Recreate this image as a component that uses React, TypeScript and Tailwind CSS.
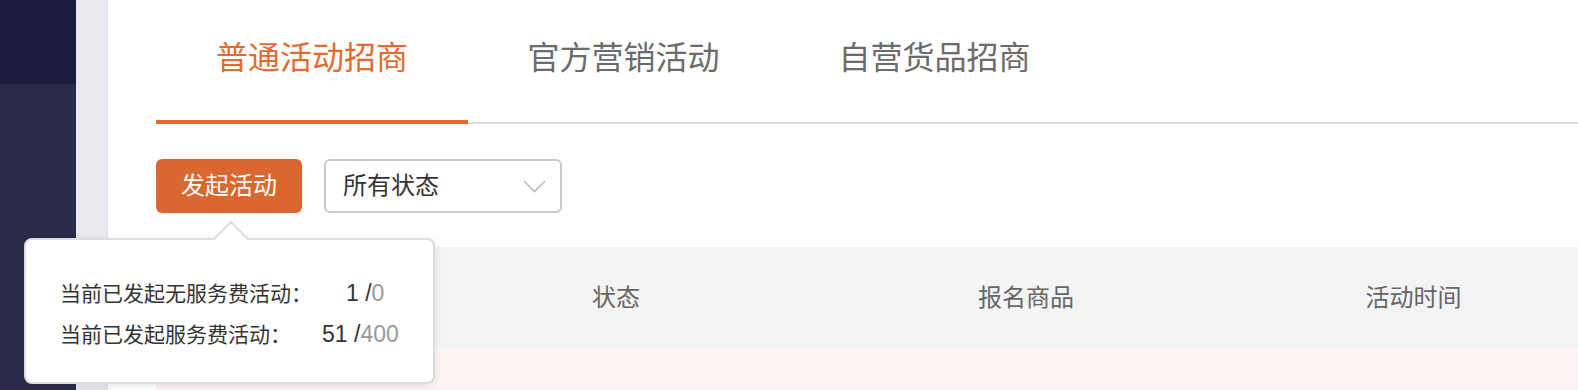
import React from "react";

const FONT = "font-['Liberation_Sans','Noto_Sans_CJK_SC',sans-serif]";

function Chevron() {
  return (
    <svg width="23" height="13" viewBox="0 0 23 13" fill="none">
      <path d="M1 1L11.5 11.5L22 1" stroke="#bdbdc2" strokeWidth="1.6" />
    </svg>
  );
}

export default function App() {
  const tabs = ["普通活动招商", "官方营销活动", "自营货品招商"];
  return (
    <div className={`relative flex w-[1578px] h-[390px] overflow-hidden bg-white ${FONT}`}>
      <aside className="w-[76px] flex flex-col shrink-0">
        <div className="h-[84px] bg-[#1c1d3e]" />
        <div className="flex-1 bg-[#2a2b48]" />
      </aside>
      <div className="w-[32px] shrink-0 bg-[#e9e9ef]" />
      <main className="flex-1 min-w-0 bg-white pl-[48px] overflow-hidden rounded-tl-[3px] shadow-[-1px_0_2px_rgba(0,0,0,0.04)]">
        <div className="flex h-[124px] border-b-2 border-[#dcdce1]">
          {tabs.map((t, i) => (
            <div
              key={t}
              className={`w-[311px] shrink-0 h-[124px] -mb-[2px] pb-[4px] flex items-center justify-center border-b-4 text-[32px] leading-none ${
                i === 0 ? "w-[312px] border-[#e46b30] text-[#e46b30]" : "border-transparent text-[#6b6b6b]"
              }`}
            >
              {t}
            </div>
          ))}
        </div>

        <div className="flex items-center gap-[22px] mt-[35px]">
          <button className="w-[146px] h-[54px] rounded-[6px] bg-[#d9672f] text-white text-[24px] leading-none flex items-center justify-center">
            发起活动
          </button>
          <div className="w-[238px] h-[54px] rounded-[6px] border-2 border-[#c8cad0] flex items-center justify-between pl-[17px] pr-[14px] text-[24px] leading-none text-[#333]">
            <span>所有状态</span>
            <Chevron />
          </div>
        </div>

        <div className="mt-[34px] w-[1440px]">
          <div className="grid grid-cols-[265px_390px_430px_355px] h-[102px] bg-[#f4f4f4] text-[24px] text-[#666] leading-none">
            <div />
            <div className="flex items-center justify-center">状态</div>
            <div className="flex items-center justify-center">报名商品</div>
            <div className="flex items-center justify-center pr-[10px]">活动时间</div>
          </div>
          <div className="h-[60px] bg-[#fdf5f3]" />
        </div>
      </main>

      <div className="absolute left-[24px] top-[238px] w-[411px] h-[146px] bg-white border-2 border-[#dcdde2] rounded-[8px] shadow-[0_2px_8px_rgba(0,0,0,0.10)] pl-[34px] pt-[33px] text-[21px] leading-[40px] text-[#333]">
        <div className="absolute left-[192px] -top-[14px] w-[26px] h-[26px] bg-white border-l-2 border-t-2 border-[#dcdde2] rotate-45" />
        <div className="relative whitespace-nowrap">
          当前已发起无服务费活动：<span className="ml-[34px] text-[23px]">1 /</span>
          <span className="text-[23px] text-[#999]">0</span>
        </div>
        <div className="relative whitespace-nowrap">
          当前已发起服务费活动：<span className="ml-[31px] text-[23px]">51 /</span>
          <span className="text-[23px] text-[#999]">400</span>
        </div>
      </div>
    </div>
  );
}
